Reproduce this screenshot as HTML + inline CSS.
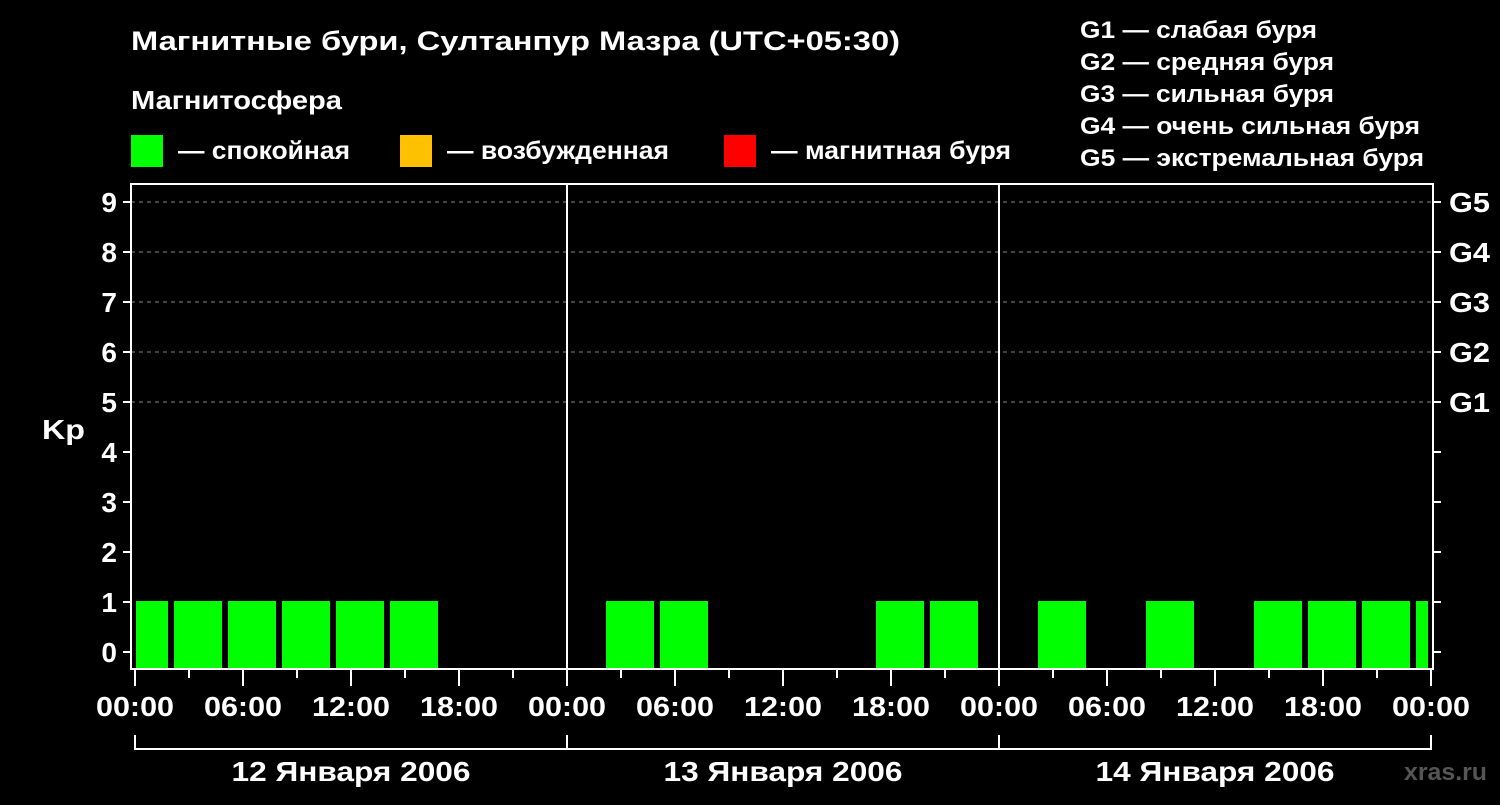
<!DOCTYPE html>
<html><head><meta charset="utf-8"><style>
body{margin:0;background:#000;width:1500px;height:800px;overflow:hidden;font-family:"Liberation Sans",sans-serif;}
</style></head><body>
<svg width="1500" height="800" xmlns="http://www.w3.org/2000/svg" font-family="Liberation Sans, sans-serif" font-weight="bold" fill="#fff">
<text x="131" y="50" font-size="27" textLength="769" lengthAdjust="spacingAndGlyphs">Магнитные бури, Султанпур Мазра (UTC+05:30)</text>
<text x="131" y="109" font-size="26" textLength="211" lengthAdjust="spacingAndGlyphs">Магнитосфера</text>
<rect x="131" y="135" width="32" height="32" fill="#00ff00"/>
<text x="178" y="159" font-size="25" textLength="172" lengthAdjust="spacingAndGlyphs">— спокойная</text>
<rect x="400" y="135" width="32" height="32" fill="#ffc000"/>
<text x="447" y="159" font-size="25" textLength="222" lengthAdjust="spacingAndGlyphs">— возбужденная</text>
<rect x="724" y="135" width="32" height="32" fill="#ff0000"/>
<text x="771" y="159" font-size="25" textLength="240" lengthAdjust="spacingAndGlyphs">— магнитная буря</text>
<g font-size="24" lengthAdjust="spacingAndGlyphs">
<text x="1080" y="38" textLength="237" lengthAdjust="spacingAndGlyphs">G1 — слабая буря</text>
<text x="1080" y="70" textLength="254" lengthAdjust="spacingAndGlyphs">G2 — средняя буря</text>
<text x="1080" y="102" textLength="254" lengthAdjust="spacingAndGlyphs">G3 — сильная буря</text>
<text x="1080" y="134" textLength="340" lengthAdjust="spacingAndGlyphs">G4 — очень сильная буря</text>
<text x="1080" y="166" textLength="344" lengthAdjust="spacingAndGlyphs">G5 — экстремальная буря</text>
</g>
<g stroke="#888" stroke-dasharray="4,4" stroke-width="1">
<line x1="131" x2="1433" y1="202" y2="202"/><line x1="131" x2="1433" y1="252" y2="252"/>
<line x1="131" x2="1433" y1="302" y2="302"/><line x1="131" x2="1433" y1="352" y2="352"/>
<line x1="131" x2="1433" y1="402" y2="402"/>
</g>
<g fill="#00ff00">
<rect x="136" y="601" width="32" height="67"/><rect x="174" y="601" width="48" height="67"/>
<rect x="228" y="601" width="48" height="67"/><rect x="282" y="601" width="48" height="67"/>
<rect x="336" y="601" width="48" height="67"/><rect x="390" y="601" width="48" height="67"/>
<rect x="606" y="601" width="48" height="67"/><rect x="660" y="601" width="48" height="67"/>
<rect x="876" y="601" width="48" height="67"/><rect x="930" y="601" width="48" height="67"/>
<rect x="1038" y="601" width="48" height="67"/><rect x="1146" y="601" width="48" height="67"/>
<rect x="1254" y="601" width="48" height="67"/><rect x="1308" y="601" width="48" height="67"/>
<rect x="1362" y="601" width="48" height="67"/><rect x="1416" y="601" width="12" height="67"/>
</g>
<g stroke="#fff" stroke-width="2" fill="none">
<rect x="131" y="184" width="1302" height="485"/>
<line x1="567" x2="567" y1="184" y2="669"/><line x1="999" x2="999" y1="184" y2="669"/>
<path d="M123 202H131M123 252H131M123 302H131M123 352H131M123 402H131M123 452H131M123 502H131M123 552H131M123 602H131M123 652H131"/>
<path d="M1433 202H1441M1433 252H1441M1433 302H1441M1433 352H1441M1433 402H1441M1433 452H1441M1433 502H1441M1433 552H1441M1433 602H1441M1433 652H1441"/>
<path d="M135 670V686M189 670V678M243 670V686M297 670V678M351 670V686M405 670V678M459 670V686M513 670V678M567 670V686M621 670V678M675 670V686M729 670V678M783 670V686M837 670V678M891 670V686M945 670V678M999 670V686M1053 670V678M1107 670V686M1161 670V678M1215 670V686M1269 670V678M1323 670V686M1377 670V678M1431 670V686"/>
<path d="M135 735V749H1431V735M567 735V749M999 735V749"/>
</g>
<g font-size="28" text-anchor="end">
<text x="117" y="212">9</text><text x="117" y="262">8</text><text x="117" y="312">7</text><text x="117" y="362">6</text><text x="117" y="412">5</text><text x="117" y="462">4</text><text x="117" y="512">3</text><text x="117" y="562">2</text><text x="117" y="612">1</text><text x="117" y="662">0</text>
</g>
<text x="42" y="439" font-size="28" textLength="43" lengthAdjust="spacingAndGlyphs">Kp</text>
<g font-size="28">
<text x="1449" y="212" textLength="41" lengthAdjust="spacingAndGlyphs">G5</text><text x="1449" y="262" textLength="41" lengthAdjust="spacingAndGlyphs">G4</text><text x="1449" y="312" textLength="41" lengthAdjust="spacingAndGlyphs">G3</text><text x="1449" y="362" textLength="41" lengthAdjust="spacingAndGlyphs">G2</text><text x="1449" y="412" textLength="41" lengthAdjust="spacingAndGlyphs">G1</text>
</g>
<g font-size="28" text-anchor="middle">
<text x="135" y="716" textLength="78" lengthAdjust="spacingAndGlyphs">00:00</text><text x="243" y="716" textLength="78" lengthAdjust="spacingAndGlyphs">06:00</text><text x="351" y="716" textLength="78" lengthAdjust="spacingAndGlyphs">12:00</text><text x="459" y="716" textLength="78" lengthAdjust="spacingAndGlyphs">18:00</text>
<text x="567" y="716" textLength="78" lengthAdjust="spacingAndGlyphs">00:00</text><text x="675" y="716" textLength="78" lengthAdjust="spacingAndGlyphs">06:00</text><text x="783" y="716" textLength="78" lengthAdjust="spacingAndGlyphs">12:00</text><text x="891" y="716" textLength="78" lengthAdjust="spacingAndGlyphs">18:00</text>
<text x="999" y="716" textLength="78" lengthAdjust="spacingAndGlyphs">00:00</text><text x="1107" y="716" textLength="78" lengthAdjust="spacingAndGlyphs">06:00</text><text x="1215" y="716" textLength="78" lengthAdjust="spacingAndGlyphs">12:00</text><text x="1323" y="716" textLength="78" lengthAdjust="spacingAndGlyphs">18:00</text>
<text x="1431" y="716" textLength="78" lengthAdjust="spacingAndGlyphs">00:00</text>
<text x="351" y="781" textLength="239" lengthAdjust="spacingAndGlyphs">12 Января 2006</text><text x="783" y="781" textLength="239" lengthAdjust="spacingAndGlyphs">13 Января 2006</text><text x="1215" y="781" textLength="239" lengthAdjust="spacingAndGlyphs">14 Января 2006</text>
</g>
<text x="1487" y="780" font-size="24" fill="#555" text-anchor="end" textLength="83" lengthAdjust="spacingAndGlyphs">xras.ru</text>
</svg>
</body></html>
